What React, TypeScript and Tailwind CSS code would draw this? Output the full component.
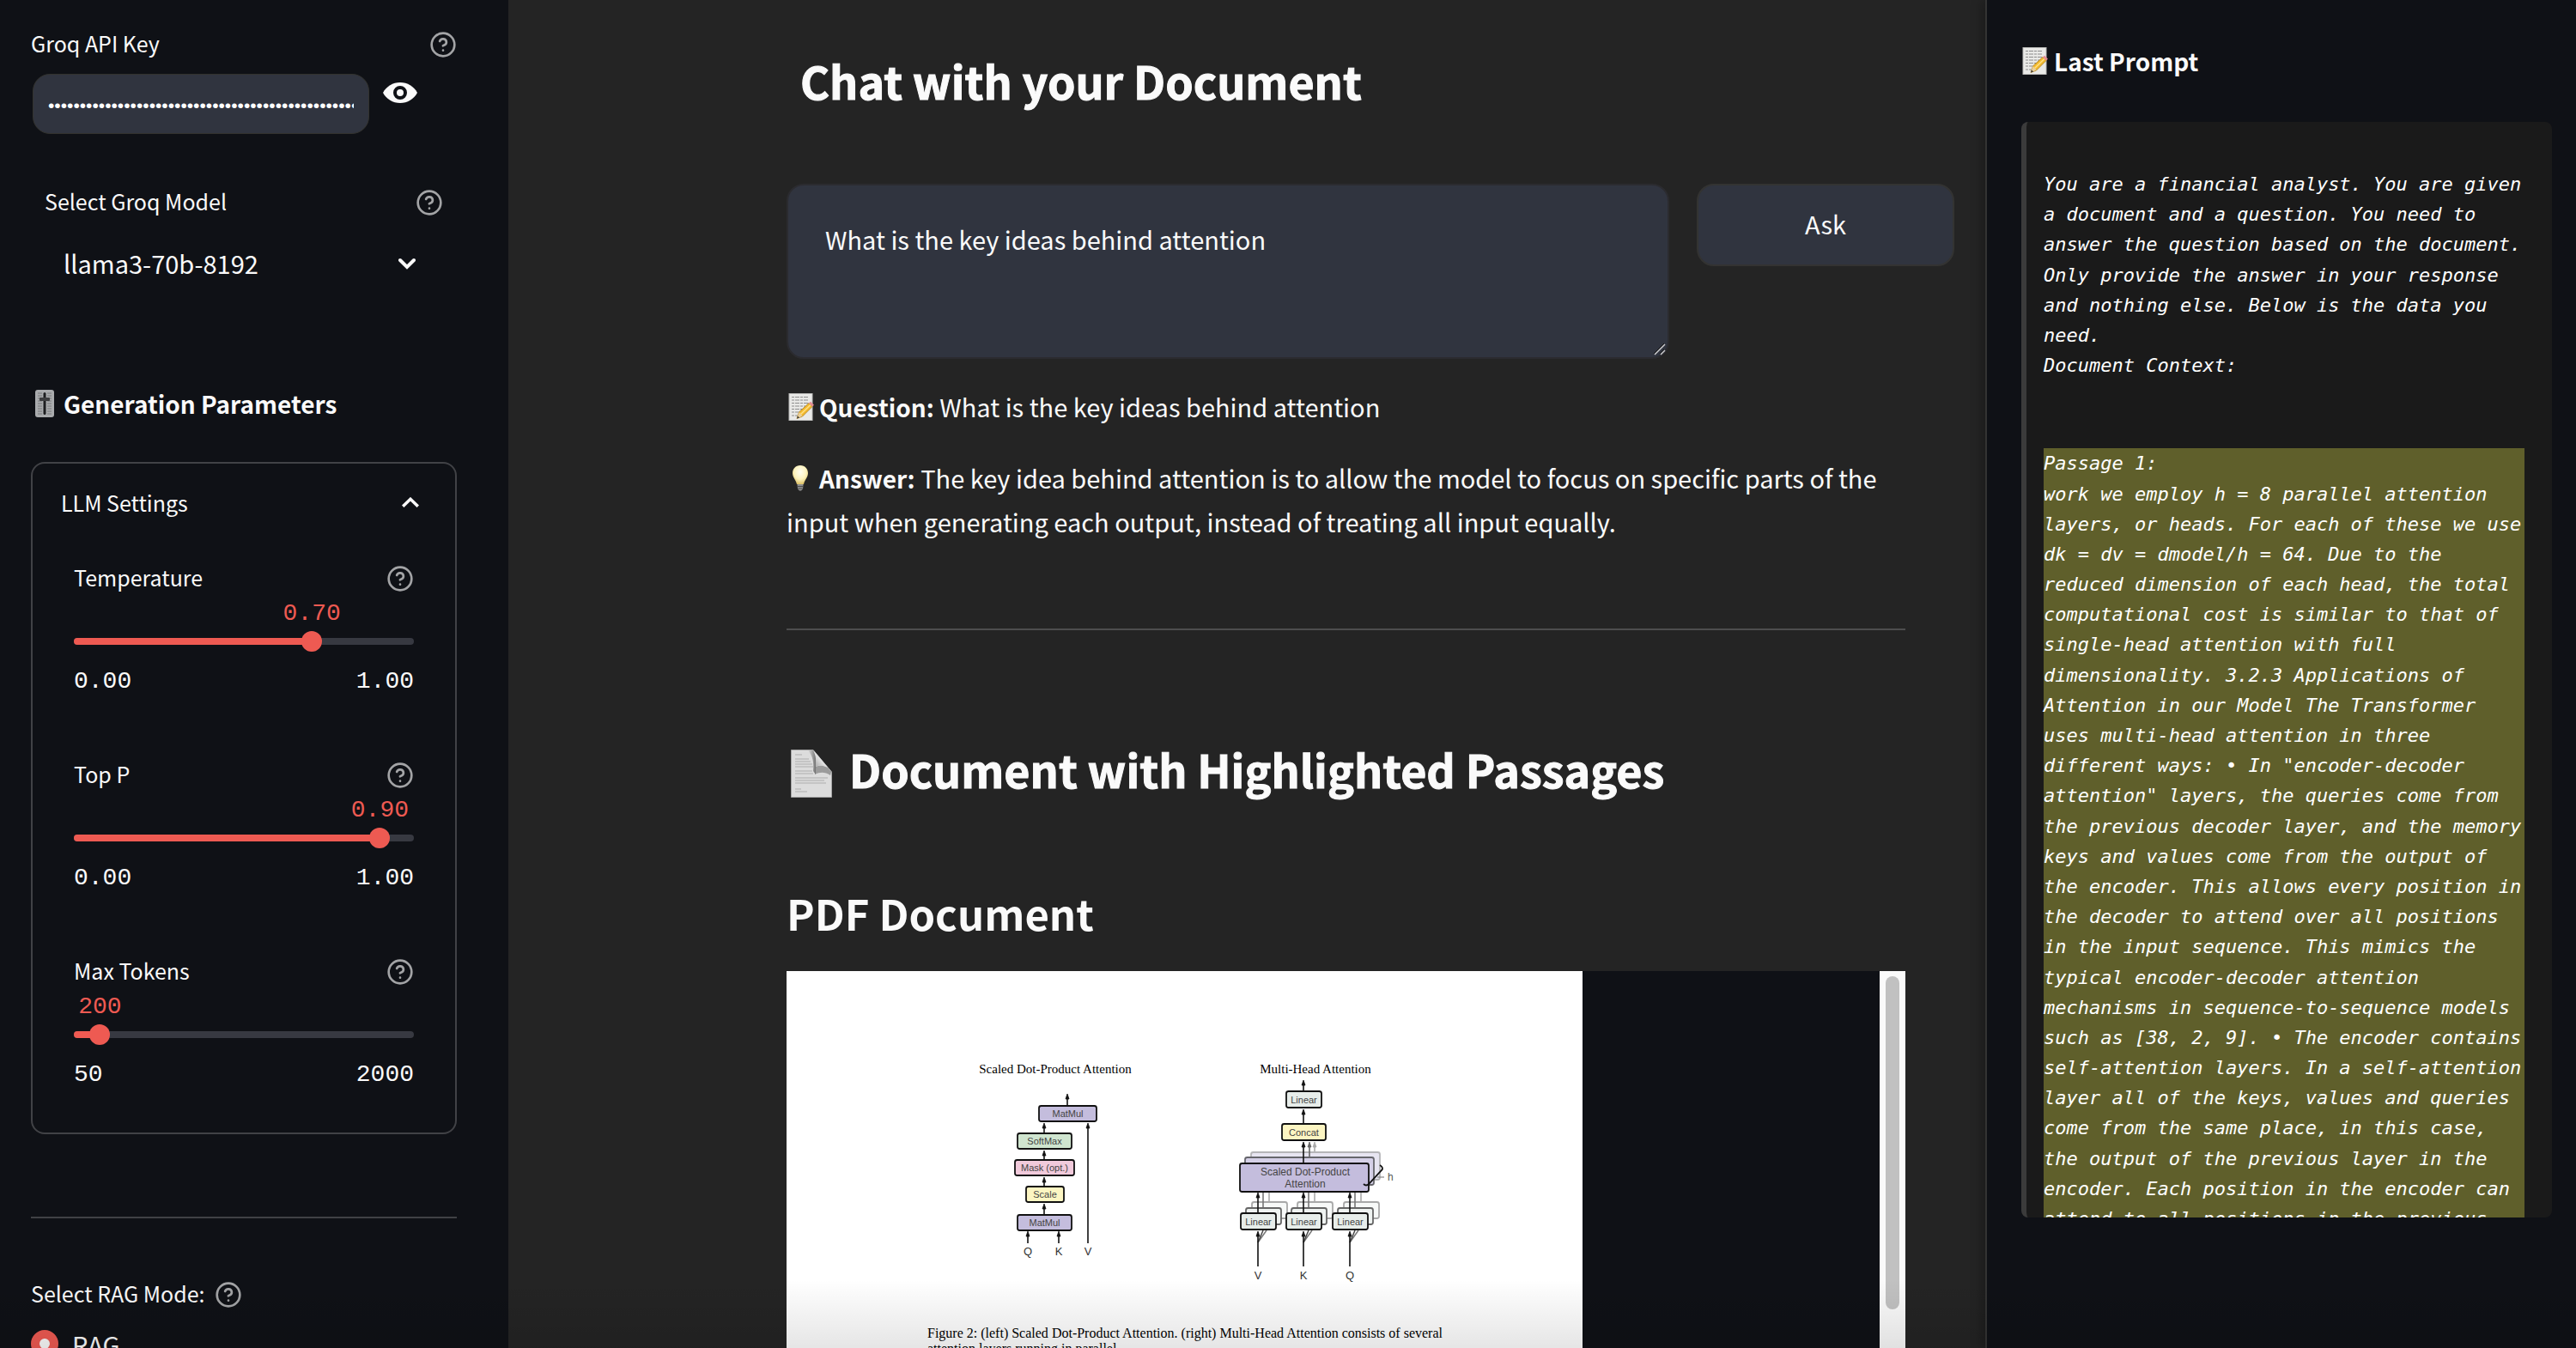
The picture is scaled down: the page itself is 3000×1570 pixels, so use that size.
import { useState } from "react";
import type { ReactNode } from "react";

const SANS = "font-['Noto_Sans_CJK_SC','Source_Sans_Pro',sans-serif]";
const LABEL = "text-[25px] leading-10";
const BODY = "text-[29px]";

function HelpIcon() {
  return (
    <svg className="mt-1 size-8 shrink-0 text-[#a3a4a6]" viewBox="0 0 24 24" fill="none" stroke="currentColor" strokeWidth="2" strokeLinecap="round" strokeLinejoin="round" aria-hidden="true">
      <circle cx="12" cy="12" r="10" />
      <path d="M9.09 9a3 3 0 0 1 5.83 1c0 2-3 3-3 3" />
      <path d="M12 17h.01" />
    </svg>
  );
}

function EyeIcon() {
  return (
    <svg className="h-6 w-10" viewBox="0 0 40 24" aria-hidden="true">
      <path d="M0 12C4 4.500 11.500 0 20 0s16 4.500 20 12c-4 7.500-11.500 12-20 12S4 19.500 0 12Z" fill="#fafafa" />
      <circle cx="20" cy="12" r="6" fill="#fafafa" stroke="#0f1116" strokeWidth="4" />
    </svg>
  );
}

function MemoIcon({ className }: { className: string }) {
  return (
    <svg className={className} viewBox="0 0 30 32" aria-hidden="true">
      <rect x="1" y="0.500" width="27" height="31" fill="#e9e9e7" stroke="#bdbdbb" />
      <g stroke="#8d8d8d" strokeWidth="1" strokeDasharray="3 1 5 1">
        <path d="M4 4.500h20M4 8h20M4 11.500h20M4 15h16M4 18.500h13M4 22h10M4 26h7" />
      </g>
      <path d="M10 29.500 12.500 22 24 11.500l4 4L16.500 27Z" fill="#f2b92e" stroke="#a97a17" strokeWidth="0.800" />
      <path d="M14.500 24.500 26 13.500" stroke="#ffe083" strokeWidth="1.600" />
      <path d="m24 11.500 2-1.800 4 4-2 1.800Z" fill="#e58b94" />
      <path d="m10 29.500 2.500-7.500 4 4.600Z" fill="#e9cf9c" />
      <path d="m10 29.500 1-3 2 2Z" fill="#333" />
    </svg>
  );
}

function BulbIcon() {
  return (
    <svg className="mr-[10px] ml-1 inline-block h-8 w-6 align-[-4px]" viewBox="0 0 24 32" aria-hidden="true">
      <defs>
        <radialGradient id="bulb" cx="0.5" cy="0.35" r="0.65">
          <stop offset="0" stopColor="#fffef2" />
          <stop offset="0.6" stopColor="#fdf3bd" />
          <stop offset="1" stopColor="#dcc066" />
        </radialGradient>
      </defs>
      <path d="M12 1c5.500 0 9 4 9 9 0 5-4 8-5 13H8C7 18 3 15 3 10c0-5 3.500-9 9-9Z" fill="url(#bulb)" />
      <path d="M8.500 23h7l-.500 5.500-2 2h-2l-2-2Z" fill="#8f8f8f" />
      <path d="M8.500 25.500h7M9 28h6" stroke="#4a4a4a" strokeWidth="1" />
    </svg>
  );
}

function PageIcon() {
  return (
    <svg className="mt-[10px] h-[56px] w-[48px] shrink-0" viewBox="0 0 48 56" aria-hidden="true">
      <defs>
        <linearGradient id="fold" x1="0" y1="1" x2="1" y2="0">
          <stop offset="0" stopColor="#8a8a8a" />
          <stop offset="0.5" stopColor="#e6e6e6" />
          <stop offset="1" stopColor="#fff" />
        </linearGradient>
        <linearGradient id="curl" x1="0" y1="0" x2="1" y2="0">
          <stop offset="0" stopColor="#dcdcdc" />
          <stop offset="1" stopColor="#6f6f6f" />
        </linearGradient>
      </defs>
      <path d="M.500.500H26L47.500 26v29.500H.500Z" fill="#dcdcdc" stroke="#a5a5a5" />
      <path d="M5 6h8M5 11h16M5 14h18M5 17h20M5 20h21M5 25h20M5 28h21M5 33h38M5 36h34M5 39h36M5 46h7M5 49h14" stroke="#adadad" strokeWidth="1" />
      <path d="M20 1h6c3 5 4 12 3 22v6l-3-4C27 16 26 8 20 1Z" fill="url(#curl)" />
      <path d="M29 20c6-3 14-1 18 6l-1 4c-6-4-12-4-18-1Z" fill="#6f6f6f" opacity="0.6" />
      <path d="M26 .500c4 6 4 11 3 19 6-2 14-1 18 6Z" fill="url(#fold)" />
    </svg>
  );
}

function FaderIcon() {
  return (
    <svg className="h-8 w-[22px] shrink-0" viewBox="0 0 22 32" aria-hidden="true">
      <rect width="22" height="32" rx="3" fill="#a9abad" />
      <path d="M3 4h5M3 7h5M3 10h5M3 13h5M3 16h5M3 19h5M3 22h5M3 25h5M3 28h5M14 4h5M14 7h5M14 10h5M14 13h5M14 16h5M14 19h5M14 22h5M14 25h5M14 28h5" stroke="#77797b" strokeWidth="1" />
      <rect x="9.500" y="3" width="3" height="26" rx="1.500" fill="#1d1e20" />
      <rect x="5" y="9" width="12" height="4" rx="1" fill="#3d3e40" />
    </svg>
  );
}

type SliderProps = { id: string; label: string; min: number; max: number; step: number; initial: number; digits: number };

function Slider({ id, label, min, max, step, initial, digits }: SliderProps) {
  const [value, setValue] = useState(initial);
  const percent = ((value - min) / (max - min)) * 100;
  return (
    <div>
      <div className="flex items-center justify-between">
        <label htmlFor={id} className={LABEL}>{label}</label>
        <HelpIcon />
      </div>
      <div className="relative mt-[7px] h-8 font-['Liberation_Mono',monospace] text-[28px] leading-8 text-[#ee5a52]">
        <output htmlFor={id} className="absolute -translate-x-1/2" style={{ left: `${percent}%` }}>
          {value.toFixed(digits)}
        </output>
      </div>
      <div className="relative mt-1 flex h-6 items-center">
        <div className="h-2 w-full overflow-hidden rounded-full bg-[#373941]">
          <div className="h-full bg-[#ee5a52]" style={{ width: `${percent}%` }} />
        </div>
        <input
          id={id}
          type="range"
          min={min}
          max={max}
          step={step}
          value={value}
          onChange={(e) => setValue(Number(e.target.value))}
          className="absolute -left-3 h-6 w-[calc(100%+24px)] cursor-pointer appearance-none bg-transparent [&::-webkit-slider-thumb]:size-6 [&::-webkit-slider-thumb]:appearance-none [&::-webkit-slider-thumb]:rounded-full [&::-webkit-slider-thumb]:bg-[#ee5a52]"
        />
      </div>
      <div className="mt-[19px] flex justify-between font-['Liberation_Mono',monospace] text-[28px] leading-8">
        <span>{min.toFixed(digits)}</span>
        <span>{max.toFixed(digits)}</span>
      </div>
    </div>
  );
}

function Sidebar() {
  return (
    <aside className="w-[592px] shrink-0 bg-[#0f1116] pt-[30px] pr-[60px] pl-9">
      <div className="flex items-center justify-between">
        <label htmlFor="api-key" className={LABEL}>Groq API Key</label>
        <HelpIcon />
      </div>
      <div className="mt-4 flex items-start gap-4">
        <div className="ml-[2px] h-[70px] w-[392px] rounded-[20px] border border-[#33332f] bg-[#30343f] px-[17px]">
          <input
            id="api-key"
            type="password"
            defaultValue="gsk_0123456789abcdefghijklmnopqrstuvwxyzABCDEFGHIJKLMNOP"
            className="h-full w-full bg-transparent pt-1 font-['Liberation_Sans',sans-serif] text-[21px] text-white outline-none"
          />
        </div>
        <button type="button" aria-label="Show password" className="mt-[10px]"><EyeIcon /></button>
      </div>

      <div className="mt-[58px] px-4">
        <div className="flex items-center justify-between">
          <label htmlFor="model" className={LABEL}>Select Groq Model</label>
          <HelpIcon />
        </div>
        <div className="relative mt-7 flex items-center">
          <select id="model" defaultValue="llama3-70b-8192" className={`h-12 w-full appearance-none bg-transparent pl-[22px] leading-[48px] outline-none ${BODY}`}>
            <option>llama3-70b-8192</option>
            <option>llama3-8b-8192</option>
          </select>
          <svg className="pointer-events-none absolute right-8 h-4 w-5" viewBox="0 0 20 16" fill="none" stroke="#fafafa" strokeWidth="4" strokeLinecap="round" aria-hidden="true">
            <path d="m2 5 8 8 8-8" />
          </svg>
        </div>
      </div>

      <h2 className="mt-[116px] flex items-center gap-[11px] pl-[5px] text-[28px] leading-[48px] font-bold whitespace-nowrap">
        <FaderIcon />
        Generation Parameters
      </h2>

      <section className="mt-11 rounded-2xl border-2 border-[#414246] pt-[25px] pb-[51px]">
        <button type="button" aria-expanded="true" className="flex w-full items-center justify-between pr-[42px] pl-[33px]">
          <span className={LABEL}>LLM Settings</span>
          <svg className="h-3 w-5" viewBox="0 0 20 12" fill="none" stroke="#fafafa" strokeWidth="3.500" aria-hidden="true">
            <path d="m1.200 10.800 8.800-8.500 8.800 8.500" />
          </svg>
        </button>
        <div className="mt-[47px] flex flex-col gap-[71px] px-12">
          <Slider id="temperature" label="Temperature" min={0} max={1} step={0.01} initial={0.7} digits={2} />
          <Slider id="top-p" label="Top P" min={0} max={1} step={0.01} initial={0.9} digits={2} />
          <Slider id="max-tokens" label="Max Tokens" min={50} max={2000} step={1} initial={200} digits={0} />
        </div>
      </section>

      <hr className="mt-24 border-t-2 border-[#404145]" />

      <fieldset className="mt-[67px]">
        <legend className="flex items-center gap-3">
          <span className={LABEL}>Select RAG Mode:</span>
          <HelpIcon />
        </legend>
        <label className={`mt-[15px] flex items-center gap-4 leading-[48px] ${BODY}`}>
          <input type="radio" name="mode" defaultChecked className="size-8 appearance-none rounded-full border-[10px] border-[#ee5a52] bg-[#fafafa]" />
          RAG
        </label>
      </fieldset>
    </aside>
  );
}

function Arrow({ x, from, to, color = "#111" }: { x: number; from: number; to: number; color?: string }) {
  return (
    <g stroke={color} fill={color}>
      <path d={`M${x} ${from}V${to + 4}`} strokeWidth="1.600" />
      <path d={`M${x} ${to + 1}l2 6h-4Z`} strokeWidth="0.800" />
    </g>
  );
}

type NodeProps = { x: number; y: number; w: number; h: number; fill: string; stroke?: string; children?: ReactNode };

function Node({ x, y, w, h, fill, stroke = "#111", children }: NodeProps) {
  return (
    <g>
      <rect x={x + 1} y={y + 1} width={w - 2} height={h - 2} rx="2.500" fill={fill} stroke={stroke} strokeWidth="1.800" />
      <text x={x + w / 2} y={y + h / 2 + 4} textAnchor="middle" fontSize="11" fill="#444">{children}</text>
    </g>
  );
}

const HEADS = [
  { x: 549, name: "V" },
  { x: 602, name: "K" },
  { x: 656, name: "Q" },
];

function AttentionFigure() {
  return (
    <svg className="h-[413px] w-[927px] max-w-none font-['Liberation_Sans',sans-serif]" viewBox="0 0 927 413" role="img" aria-label="Scaled dot-product attention and multi-head attention">
      <g className="font-['Liberation_Serif',serif]" fontSize="15" textAnchor="middle" fill="#000">
        <text x="313" y="119">Scaled Dot-Product Attention</text>
        <text x="616" y="119">Multi-Head Attention</text>
      </g>

      <Arrow x={327} from={157} to={142} />
      <Arrow x={300} from={188} to={176} />
      <Arrow x={300} from={219} to={208} />
      <Arrow x={300} from={250} to={239} />
      <Arrow x={300} from={283} to={270} />
      <Arrow x={281} from={317} to={302} />
      <Arrow x={317} from={317} to={302} />
      <Arrow x={351} from={317} to={176} />
      <Node x={293} y={156} w={69} h={20} fill="#c4bddd">MatMul</Node>
      <Node x={268} y={188} w={65} h={20} fill="#cfe5cf">SoftMax</Node>
      <Node x={265} y={219} w={71} h={20} fill="#f1cadb">Mask (opt.)</Node>
      <Node x={278} y={250} w={46} h={20} fill="#fcf5c2">Scale</Node>
      <Node x={268} y={283} w={65} h={20} fill="#c4bddd">MatMul</Node>
      <g fontSize="13" textAnchor="middle" fill="#333">
        <text x="281" y="331">Q</text>
        <text x="317" y="331">K</text>
        <text x="351" y="331">V</text>
      </g>

      <Arrow x={602} from={139} to={126} />
      <Arrow x={602} from={177} to={160} />
      <Node x={581} y={139} w={43} h={21} fill="#e7edea">Linear</Node>
      <Node x={576} y={177} w={53} h={21} fill="#fcf5c2">Concat</Node>
      <Arrow x={615} from={210} to={198} color="#aaa" />
      <Node x={540} y={210} w={152} h={34} fill="#e7e5f1" stroke="#b5b5b8" />
      <Arrow x={609} from={217} to={198} color="#666" />
      <Node x={533} y={216} w={152} h={34} fill="#d5d0e7" stroke="#66666c" />
      <Arrow x={602} from={224} to={198} />
      {HEADS.map(({ x, name }) => (
        <g key={name}>
          <path d={`M${x} 316l10-14`} stroke="#777" strokeWidth="1.500" />
          <path d={`M${x} 316l6-14`} stroke="#444" strokeWidth="1.500" />
          <path d={`M${x + 13} 268V257`} stroke="#aaa" strokeWidth="1.600" />
          <Node x={x - 8} y={268} w={43} h={21} fill="#f7f9f8" stroke="#a8a8a8" />
          <path d={`M${x + 6} 275V257`} stroke="#777" strokeWidth="1.600" />
          <Node x={x - 15} y={275} w={43} h={21} fill="#eff3f1" stroke="#666" />
          <Arrow x={x} from={281} to={257} />
          <Arrow x={x} from={344} to={302} />
          <Node x={x - 21} y={281} w={43} h={21} fill="#e7edea">Linear</Node>
          <text x={x} y="359" textAnchor="middle" fontSize="13" fill="#333">{name}</text>
        </g>
      ))}
      <Node x={527} y={223} w={152} h={35} fill="#c4bddd" />
      <g fontSize="12" textAnchor="middle" fill="#444">
        <text x="604" y="238">Scaled Dot-Product</text>
        <text x="604" y="252">Attention</text>
      </g>
      <path d="M672 248c2 2 4 2 6 0l15-16c2-2 1-4-2-6" fill="none" stroke="#111" strokeWidth="1.800" />
      <path d="M688 240h8" stroke="#888" strokeWidth="1.200" />
      <text x="700" y="244" fontSize="12" fill="#555">h</text>
    </svg>
  );
}

function PdfFrame() {
  return (
    <div className="mt-8 mr-[57px] flex h-[1200px] bg-[#0f1116]">
      <div className="w-[927px] shrink-0 overflow-hidden bg-white text-black">
        <AttentionFigure />
        <p className="ml-[164px] w-[600px] text-justify font-['Liberation_Serif',serif] text-base leading-[18px]">
          Figure 2: (left) Scaled Dot-Product Attention. (right) Multi-Head Attention consists of several attention layers running in parallel.
        </p>
      </div>
      <div className="ml-auto w-[30px] bg-[#fafafa] px-[7px] pt-[6px]">
        <div className="h-[388px] rounded-full bg-[#c1c1c1]" />
      </div>
    </div>
  );
}

function Main() {
  return (
    <main className="min-w-0 flex-1 pt-[58px] pr-9 pl-[324px]">
      <h1 className="pl-4 text-[52px] leading-[72px] font-bold [-webkit-text-stroke:1px]">Chat with your Document</h1>
      <form className="mt-[84px] flex items-start gap-8" onSubmit={(e) => e.preventDefault()}>
        <div className="relative flex flex-1">
          <textarea
            aria-label="Question"
            defaultValue="What is the key ideas behind attention"
            className={`h-[204px] flex-1 resize-none rounded-[20px] border-2 border-[#2b2b2f] bg-[#30343f] px-[43px] pt-[38px] leading-[48px] outline-none ${BODY}`}
          />
          <svg className="pointer-events-none absolute right-1 bottom-1 size-[14px]" viewBox="0 0 14 14" aria-hidden="true">
            <path d="M1 13 13 1M8 13l5-5" stroke="#c9c9cb" strokeWidth="1.500" />
            <path d="M0 12 12 0M7 12l5-5" stroke="#111" strokeWidth="1" />
          </svg>
        </div>
        <button type="submit" className={`h-24 w-[300px] rounded-[20px] border-2 border-[#333332] bg-[#30343f] pb-1 leading-[48px] ${BODY}`}>Ask</button>
      </form>
      <p className={`mt-[30px] mr-[57px] leading-[51px] ${BODY}`}>
        <MemoIcon className="mr-[6px] ml-[2px] inline-block h-8 w-[30px] align-[-4px]" />
        <strong className="text-[28px] leading-none">Question:</strong> What is the key ideas behind attention
      </p>
      <p className={`mt-8 mr-[57px] leading-[51px] ${BODY}`}>
        <BulbIcon />
        <strong className="text-[28px] leading-none">Answer:</strong> The key idea behind attention is to allow the model to focus on specific parts of the input when generating each output, instead of treating all input equally.
      </p>
      <hr className="mt-[99px] mr-[57px] border-t-2 border-[#4d4d4e]" />
      <h2 className="mt-[126px] flex items-center gap-5 pl-[5px] text-[52px] leading-[72px] font-bold [-webkit-text-stroke:1px]">
        <PageIcon />
        Document with Highlighted Passages
      </h2>
      <h3 className="mt-[95px] text-[49px] leading-[72px] font-bold">PDF Document</h3>
      <PdfFrame />
    </main>
  );
}

const INSTRUCTIONS = `You are a financial analyst. You are given a document and a question. You need to answer the question based on the document. Only provide the answer in your response and nothing else. Below is the data you need.
Document Context:`;

const PASSAGE = `Passage 1:
work we employ h = 8 parallel attention layers, or heads. For each of these we use dk = dv = dmodel/h = 64. Due to the reduced dimension of each head, the total computational cost is similar to that of single-head attention with full dimensionality. 3.2.3 Applications of Attention in our Model The Transformer uses multi-head attention in three different ways: • In "encoder-decoder attention" layers, the queries come from the previous decoder layer, and the memory keys and values come from the output of the encoder. This allows every position in the decoder to attend over all positions in the input sequence. This mimics the typical encoder-decoder attention mechanisms in sequence-to-sequence models such as [38, 2, 9]. • The encoder contains self-attention layers. In a self-attention layer all of the keys, values and queries come from the same place, in this case, the output of the previous layer in the encoder. Each position in the encoder can attend to all positions in the previous layer of the encoder.`;

function PromptPanel() {
  return (
    <aside className="w-[688px] shrink-0 border-l-2 border-[#333] bg-[#0f1116] pt-[51px] pr-7 pl-10 shadow-[-4px_0_12px_rgba(0,0,0,0.25)]">
      <h2 className="flex items-center gap-[7px] pl-px text-[28px] leading-10 font-bold">
        <MemoIcon className="h-8 w-[30px] shrink-0" />
        Last Prompt
      </h2>
      <div className="mt-[51px] h-[1276px] overflow-hidden rounded-lg border-l-[6px] border-[#3b3b3b] bg-[#1a1a1a] pt-[55px] pr-8 pl-5 font-['DejaVu_Sans_Mono',monospace] text-[22px] leading-[1.6] whitespace-pre-wrap text-white italic">
        <p>{INSTRUCTIONS}</p>
        <p className="mt-[79px] bg-[#5f5f2b]">{PASSAGE}</p>
      </div>
    </aside>
  );
}

export default function App() {
  return (
    <div className={`relative flex h-screen overflow-hidden bg-[#242424] text-[#fafafa] ${SANS}`}>
      <Sidebar />
      <Main />
      <PromptPanel />
      <div className="pointer-events-none absolute inset-x-0 bottom-0 h-20 bg-linear-to-b from-transparent to-black/10" />
    </div>
  );
}
